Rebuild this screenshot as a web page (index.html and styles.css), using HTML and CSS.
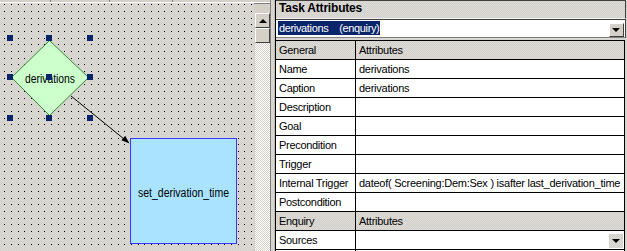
FILE: index.html
```html
<!DOCTYPE html>
<html lang="en">
<head>
  <meta charset="UTF-8">
  <title>Task Attributes</title>
  <link rel="stylesheet" href="styles.css">
</head>
<body>
  <div class="app">
    <div class="designer">
      <div class="tabs">
        <span class="tab" style="width: 50px"></span>
        <span class="tab" style="width: 58px"></span>
        <span class="tab" style="width: 62px"></span>
      </div>
      <div class="canvas-row">
        <div class="canvas">
          <svg width="254" height="248" viewBox="0 3 254 248">
            <defs>
              <pattern id="dots" x="4" y="4" width="20" height="20" patternUnits="userSpaceOnUse">
                <rect x="0" y="0" width="1" height="1" />
                <rect x="7" y="0" width="1" height="1" />
                <rect x="14" y="0" width="1" height="1" />
                <rect x="0" y="7" width="1" height="1" />
                <rect x="7" y="7" width="1" height="1" />
                <rect x="14" y="7" width="1" height="1" />
                <rect x="0" y="14" width="1" height="1" />
                <rect x="7" y="14" width="1" height="1" />
                <rect x="14" y="14" width="1" height="1" />
              </pattern>
            </defs>
            <rect x="0" y="3" width="254" height="248" fill="url(#dots)" />

            <!-- enquiry node -->
            <polygon points="49.5,40.5 88.5,77.5 49.5,115.5 11.5,77.5" fill="#ccffcc" stroke="#2f8f2f" />
            <text class="node-label" x="25" y="83" textLength="50" lengthAdjust="spacingAndGlyphs">derivations</text>

            <!-- link -->
            <line x1="71" y1="96" x2="124" y2="139" stroke="#000" />
            <polygon points="129.5,143.5 121.4,140.3 125.2,135.7" fill="#000" />

            <!-- action node -->
            <rect x="130.5" y="138.5" width="106" height="105" fill="#aae3ff" stroke="#3a3aff" />
            <text class="node-label" x="138" y="197" textLength="91" lengthAdjust="spacingAndGlyphs">set_derivation_time</text>

            <!-- selection handles -->
            <g fill="#0a246a">
              <rect x="7" y="35" width="6" height="6" />
              <rect x="46" y="35" width="6" height="6" />
              <rect x="87" y="35" width="6" height="6" />
              <rect x="7" y="74" width="6" height="6" />
              <rect x="46" y="74" width="6" height="6" />
              <rect x="87" y="74" width="6" height="6" />
              <rect x="7" y="115" width="6" height="6" />
              <rect x="46" y="115" width="6" height="6" />
              <rect x="87" y="115" width="6" height="6" />
            </g>
          </svg>
        </div>
        <div class="vscroll">
          <div class="sb-btn"><span class="tri-up"></span></div>
          <div class="sb-btn"></div>
          <div class="sb-track"></div>
        </div>
      </div>
    </div>

    <div class="splitter"></div>

    <div class="props">
      <div class="props-title">Task Attributes</div>
      <div class="combo">
        <span class="combo-sel">derivations    (enquiry)</span>
        <span class="drop-btn"><span class="tri-down"></span></span>
      </div>
      <table class="grid">
        <tr class="group">
          <td class="key">General</td>
          <td class="val">Attributes</td>
        </tr>
        <tr><td class="key">Name</td><td class="val">derivations</td></tr>
        <tr><td class="key">Caption</td><td class="val">derivations</td></tr>
        <tr><td class="key">Description</td><td class="val"></td></tr>
        <tr><td class="key">Goal</td><td class="val"></td></tr>
        <tr><td class="key">Precondition</td><td class="val"></td></tr>
        <tr><td class="key">Trigger</td><td class="val"></td></tr>
        <tr><td class="key">Internal Trigger</td><td class="val">dateof( Screening:Dem:Sex ) isafter last_derivation_time</td></tr>
        <tr><td class="key">Postcondition</td><td class="val"></td></tr>
        <tr class="group">
          <td class="key">Enquiry</td>
          <td class="val">Attributes</td>
        </tr>
        <tr>
          <td class="key">Sources</td>
          <td class="val val-drop"><span class="cell-drop"><span class="tri-down"></span></span></td>
        </tr>
        <tr><td class="key"></td><td class="val"></td></tr>
      </table>
    </div>
  </div>
</body>
</html>
```

FILE: styles.css
```css
body {
  margin: 0;
  padding: 0;
  font-family: "Liberation Sans", Arial, sans-serif;
  font-size: 11px;
  color: #000;
  background: #d4d0c8;
}
.app {
  display: flex;
  width: 627px;
  height: 251px;
  overflow: hidden;
}
.designer {
  width: 270px;
  display: flex;
  flex-direction: column;
}
.tabs {
  height: 2px;
  display: flex;
  background: #d4d0c8;
  border-bottom: 1px solid #fff;
}
.tab {
  height: 2px;
  border-right: 1px solid #808080;
}
.canvas-row {
  flex: 1;
  display: flex;
}
.canvas {
  width: 254px;
  background: repeating-conic-gradient(#d2cfca 0 25%, #dedcd7 0 50%) 0 0 / 2px 2px;
  overflow: hidden;
}
.canvas svg {
  display: block;
}
.node-label {
  font-family: "Liberation Sans", Arial, sans-serif;
  font-size: 12px;
  fill: #000;
}
.vscroll {
  width: 16px;
  display: flex;
  flex-direction: column;
  padding-top: 9px;
  background: #d4d0c8;
  border-top: 1px solid #808080;
  box-sizing: border-box;
}
.sb-btn {
  width: 15px;
  height: 15px;
  margin-left: 1px;
  box-sizing: border-box;
  background: #d4d0c8;
  border-top: 1px solid #fff;
  border-left: 1px solid #fff;
  border-right: 1px solid #404040;
  border-bottom: 1px solid #404040;
  display: flex;
  align-items: center;
  justify-content: center;
}
.sb-track {
  flex: 1;
  margin-left: 1px;
  background: repeating-conic-gradient(#ffffff 0 25%, #d4d0c8 0 50%) 0 0 / 2px 2px;
}
.tri-up {
  width: 0;
  height: 0;
  border-left: 4px solid transparent;
  border-right: 4px solid transparent;
  border-bottom: 4px solid #000;
}
.tri-down {
  width: 0;
  height: 0;
  border-left: 4px solid transparent;
  border-right: 4px solid transparent;
  border-top: 4px solid #000;
}
.splitter {
  width: 5px;
  box-sizing: border-box;
  border-left: 1px solid #808080;
  border-right: 1px solid #c0bdb6;
  background: repeating-conic-gradient(#d2cfca 0 25%, #dedcd7 0 50%) 0 0 / 2px 2px;
}
.props {
  width: 352px;
  border-left: 1px solid #000;
  background: repeating-conic-gradient(#d2cfca 0 25%, #dedcd7 0 50%) 0 0 / 2px 2px;
}
.props-title {
  width: 350px;
  height: 19px;
  box-sizing: border-box;
  border-top: 1px solid #404040;
  border-right: 1px solid #404040;
  border-bottom: 1px solid #f0f0f0;
  padding-left: 3px;
  font-size: 12px;
  font-weight: bold;
  line-height: 15px;
  letter-spacing: -0.2px;
}
.combo {
  width: 350px;
  height: 19px;
  box-sizing: border-box;
  display: flex;
  align-items: flex-start;
  background: #fff;
  border-top: 1px solid #404040;
  border-right: 1px solid #404040;
  border-bottom: 1px solid #808080;
}
.combo-sel {
  margin: 1px 0 0 2px;
  height: 14px;
  line-height: 14px;
  padding: 0 1px;
  background: #0a246a;
  color: #fff;
  white-space: pre;
  font-size: 11px;
  letter-spacing: -0.35px;
}
.drop-btn {
  margin: 3px 1px 0 auto;
  width: 15px;
  height: 14px;
  box-sizing: border-box;
  background: #d4d0c8;
  border-top: 1px solid #fff;
  border-left: 1px solid #fff;
  border-right: 1px solid #404040;
  border-bottom: 1px solid #404040;
  display: flex;
  align-items: center;
  justify-content: center;
}
.grid {
  margin-top: 2px;
  width: 349px;
  table-layout: fixed;
  border-collapse: separate;
  border-spacing: 0;
  border-top: 1px solid #000;
  background: #fff;
}
.grid td {
  height: 18px;
  padding: 0 0 0 3px;
  border-bottom: 1px solid #000;
  border-right: 1px solid #000;
  white-space: nowrap;
  overflow: hidden;
  letter-spacing: -0.3px;
  vertical-align: middle;
  line-height: 18px;
}
.grid .key {
  width: 76px;
}
.grid .val {
  width: 265px;
  letter-spacing: -0.26px;
}
.grid .group td {
  background: repeating-conic-gradient(#d2cfca 0 25%, #dedcd7 0 50%) 0 0 / 2px 2px;
}
.val-drop {
  text-align: right;
}
.cell-drop {
  display: inline-flex;
  vertical-align: middle;
  align-items: center;
  justify-content: center;
  width: 14px;
  height: 14px;
  margin-right: 1px;
  background: repeating-conic-gradient(#d2cfca 0 25%, #dedcd7 0 50%) 0 0 / 2px 2px;
}
```
